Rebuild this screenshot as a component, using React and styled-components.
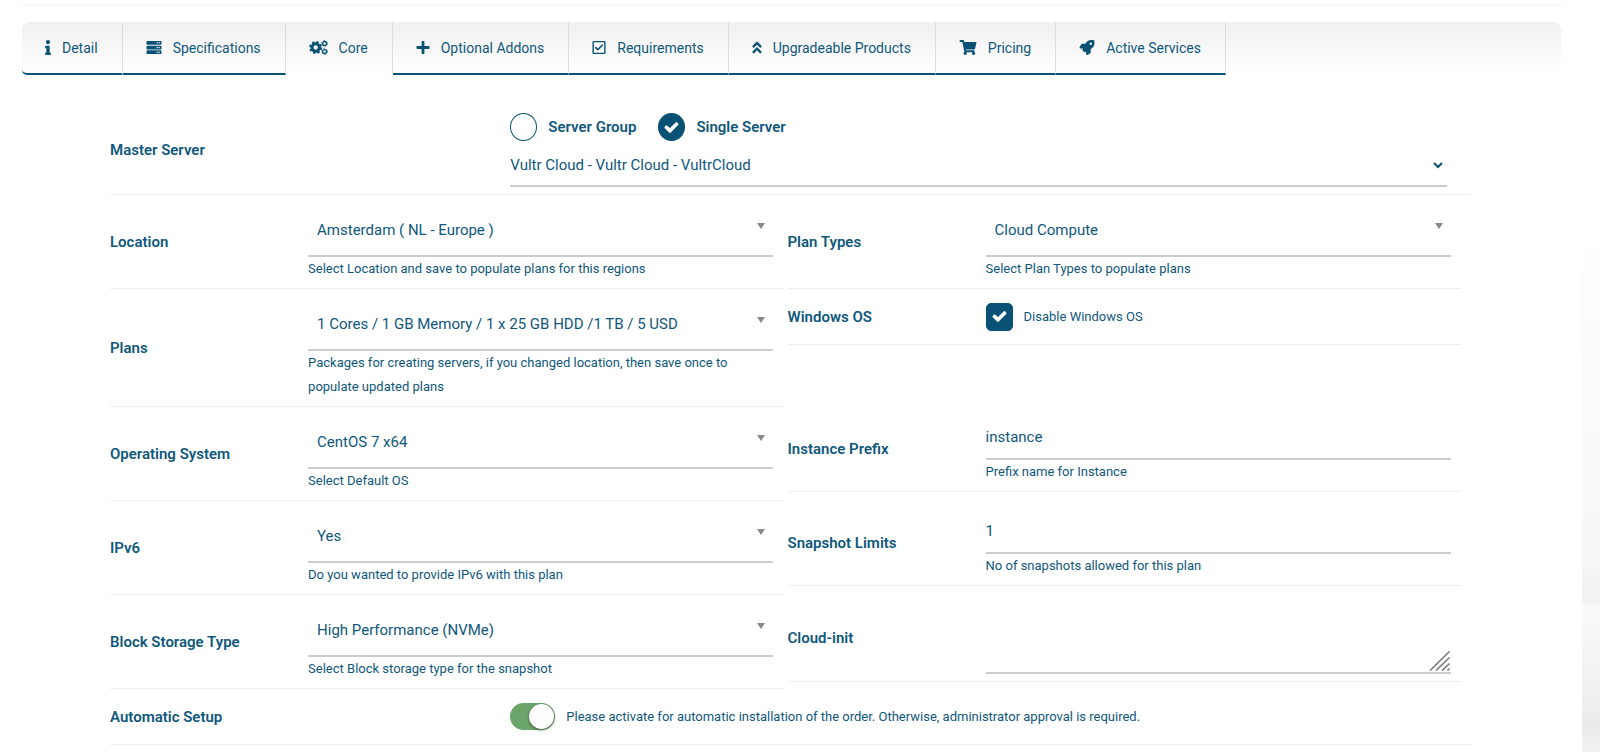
import React, { useState } from "react";
import styled, { createGlobalStyle } from "styled-components";
import {
  FaInfo,
  FaServer,
  FaPlus,
  FaRegCheckSquare,
  FaAngleDoubleUp,
  FaShoppingCart,
  FaRocket,
  FaCheck,
} from "react-icons/fa";

const GlobalStyle = createGlobalStyle`
  *, *:before, *:after {
    box-sizing: border-box;
  }
  body {
    margin: 0;
    color: #0f587c;
    background: #fff;
    font-family: Roboto, "Liberation Sans", sans-serif;
    font-size: 13px;
  }
  input, select, textarea, button {
    font: inherit;
    color: inherit;
  }
`;

const Page = styled.div`
  min-height: 100vh;
  padding-right: 18px;
  background: linear-gradient(
    to bottom,
    #fff 245px,
    #fdfdfd 246px,
    #fafafa 480px,
    #f6f6f6 560px,
    #f1f1f1 602px,
    #fafafa 606px,
    #f4f4f4 660px,
    #ebebeb 725px,
    #f2f2f2 752px
  );
`;

const Card = styled.main`
  min-height: 100vh;
  padding: 4px 21px 0 22px;
  background: #fff;
`;

const Divider = styled.hr`
  height: 2px;
  margin: 0 0 16px;
  border: 0;
  background: #f6f6f6;
`;

const Tabs = styled.nav`
  display: flex;
  border-radius: 8px 8px 0 0;
  background: linear-gradient(to bottom, #f0f0f0, #fff);
`;

const Tab = styled.button`
  display: flex;
  align-items: center;
  gap: 11px;
  height: 53px;
  padding: 0 24px 0 23px;
  border: 0;
  border-right: 1px solid #ddd;
  border-bottom: 2px solid ${(props) => (props.$active ? "transparent" : "#0a5275")};
  background: none;
  font-size: 14px;
  white-space: nowrap;
  cursor: pointer;
  &:first-child {
    border-bottom-left-radius: 5px;
  }
  svg {
    width: ${(props) => props.$iconWidth}px;
    height: 15px;
    color: #0a5275;
  }
`;

const Form = styled.form`
  padding: 31px 90px 0 88px;
`;

const Row = styled.div`
  display: grid;
  grid-template-columns: 5fr 12fr;
  align-items: center;
  min-height: 56px;
  padding: 7px 0;
  border-bottom: 1px solid #eee;
`;

const Pairs = styled.div`
  display: grid;
  grid-template-columns: 1fr 1fr;
  align-items: start;
  column-gap: 4px;
  padding-right: 10px;
`;

const Title = styled.label`
  font-size: 15px;
  font-weight: 600;
`;

const Field = styled.div`
  min-width: 0;
  padding-right: ${(props) => (props.$wide ? 24 : 10)}px;
`;

const Hint = styled.div`
  line-height: 24px;
`;

const Options = styled.div`
  display: flex;
  gap: 22px;
`;

const Option = styled.label`
  display: flex;
  align-items: center;
  gap: 11px;
  font-size: ${(props) => (props.$strong ? 15 : 13)}px;
  font-weight: ${(props) => (props.$strong ? 600 : 400)};
`;

const Tick = styled.span`
  position: relative;
  display: flex;
  width: 27px;
  height: 28px;
  input {
    width: 100%;
    height: 100%;
    margin: 0;
    appearance: none;
    border: 1px solid #0a5275;
    border-radius: ${(props) => (props.$round ? "50%" : "5px")};
  }
  input:checked {
    background: #0a5275;
  }
  svg {
    position: absolute;
    inset: 0;
    margin: auto;
    overflow: visible;
    color: #fff;
    stroke: currentColor;
    stroke-width: 40px;
    stroke-linejoin: round;
    font-size: 13px;
    pointer-events: none;
  }
`;

const SelectWrap = styled.div`
  position: relative;
  &:after {
    content: "";
    position: absolute;
    top: 21px;
    right: 8px;
    border: 4px solid transparent;
    border-top: 6px solid #888;
    border-bottom: 0;
  }
`;

const PickSelect = styled.select`
  width: 100%;
  height: 55px;
  padding: 3px 24px 0 9px;
  appearance: none;
  border: 0;
  border-bottom: 2px solid #ccc;
  background: none;
  font-size: 15px;
`;

const ServerSelectWrap = styled.div`
  position: relative;
  svg {
    position: absolute;
    top: 19px;
    right: 3px;
    pointer-events: none;
  }
`;

const ServerSelect = styled.select`
  width: 100%;
  height: 46px;
  padding: 3px 24px 0 0;
  appearance: none;
  border: 0;
  border-bottom: 2px solid #ccc;
  background: none;
  font-size: 15px;
`;

const TextInput = styled.input`
  display: block;
  width: 100%;
  height: 46px;
  padding: 2px 0 0;
  border: 0;
  border-bottom: 2px solid #ccc;
  background: none;
  font-size: 15px;
`;

const TextBox = styled.div`
  position: relative;
  svg {
    position: absolute;
    right: 0;
    bottom: 3px;
    pointer-events: none;
  }
`;

const TextArea = styled.textarea`
  display: block;
  width: 100%;
  height: 72px;
  padding: 0;
  resize: none;
  border: 0;
  border-bottom: 2px solid #ccc;
  background: none;
  font-size: 15px;
`;

const Switch = styled.input`
  flex: none;
  display: flex;
  align-items: center;
  width: 45px;
  height: 27px;
  margin: 0;
  padding: 0 1px;
  appearance: none;
  border-radius: 14px;
  background: #ccc;
  &:before {
    content: "";
    width: 25px;
    height: 25px;
    border-radius: 50%;
    background: #fff;
    box-shadow: 0 1px 3px rgba(0, 0, 0, 0.5);
  }
  &:checked {
    justify-content: flex-end;
    background: #6ba56c;
  }
`;

// one big gear and two small ones, teeth are dashed rings
function Gears() {
  return (
    <svg viewBox="0 0 20 16" fill="none" stroke="currentColor">
      <circle cx="7" cy="8" r="3.9" strokeWidth="3.2" />
      <circle cx="7" cy="8" r="5.9" strokeWidth="2" strokeDasharray="2.6 2.03" />
      <circle cx="16.5" cy="3.7" r="2.1" strokeWidth="1.4" />
      <circle cx="16.5" cy="3.7" r="3" strokeWidth="1" strokeDasharray="1.6 1.54" />
      <circle cx="16.5" cy="12.3" r="2.1" strokeWidth="1.4" />
      <circle cx="16.5" cy="12.3" r="3" strokeWidth="1" strokeDasharray="1.6 1.54" />
    </svg>
  );
}

const tabs = [
  { name: "Detail", icon: <FaInfo />, width: 6 },
  { name: "Specifications", icon: <FaServer />, width: 16 },
  { name: "Core", icon: <Gears />, width: 19 },
  { name: "Optional Addons", icon: <FaPlus />, width: 14 },
  { name: "Requirements", icon: <FaRegCheckSquare />, width: 14 },
  { name: "Upgradeable Products", icon: <FaAngleDoubleUp />, width: 10 },
  { name: "Pricing", icon: <FaShoppingCart />, width: 18 },
  { name: "Active Services", icon: <FaRocket />, width: 16 },
];

function SelectRow({ id, title, value, hint }) {
  return (
    <Row>
      <Title htmlFor={id}>{title}</Title>
      <Field>
        <SelectWrap>
          <PickSelect id={id}>
            <option>{value}</option>
          </PickSelect>
        </SelectWrap>
        <Hint>{hint}</Hint>
      </Field>
    </Row>
  );
}

function InputRow({ id, title, value, hint }) {
  return (
    <Row>
      <Title htmlFor={id}>{title}</Title>
      <Field>
        <TextInput id={id} type="text" defaultValue={value} />
        <Hint>{hint}</Hint>
      </Field>
    </Row>
  );
}

function App() {
  const [tab, setTab] = useState("Core");
  const [serverType, setServerType] = useState("single");
  const [windowsOff, setWindowsOff] = useState(true);
  const [autoSetup, setAutoSetup] = useState(true);

  return (
    <Page>
      <GlobalStyle />
      <Card>
        <Divider />
        <Tabs>
          {tabs.map((item) => (
            <Tab
              key={item.name}
              type="button"
              $active={item.name === tab}
              $iconWidth={item.width}
              onClick={() => setTab(item.name)}
            >
              {item.icon}
              {item.name}
            </Tab>
          ))}
        </Tabs>
        <Form>
          <Row>
            <Title htmlFor="server">Master Server</Title>
            <Field $wide>
              <Options>
                <Option $strong>
                  <Tick $round>
                    <input type="radio" name="type" checked={serverType === "group"} onChange={() => setServerType("group")} />
                    {serverType === "group" && <FaCheck />}
                  </Tick>
                  Server Group
                </Option>
                <Option $strong>
                  <Tick $round>
                    <input type="radio" name="type" checked={serverType === "single"} onChange={() => setServerType("single")} />
                    {serverType === "single" && <FaCheck />}
                  </Tick>
                  Single Server
                </Option>
              </Options>
              <ServerSelectWrap>
                <ServerSelect id="server">
                  <option>Vultr Cloud - Vultr Cloud - VultrCloud</option>
                </ServerSelect>
                <svg width="12" height="10" viewBox="0 0 12 10" fill="none" stroke="#0a5275" strokeWidth="2">
                  <path d="M2 3l4 4 4-4" />
                </svg>
              </ServerSelectWrap>
            </Field>
          </Row>

          <Pairs>
            <SelectRow
              id="location"
              title="Location"
              value="Amsterdam ( NL - Europe )"
              hint="Select Location and save to populate plans for this regions"
            />
            <SelectRow id="plan-types" title="Plan Types" value="Cloud Compute" hint="Select Plan Types to populate plans" />
            <SelectRow
              id="plans"
              title="Plans"
              value="1 Cores / 1 GB Memory / 1 x 25 GB HDD /1 TB / 5 USD"
              hint="Packages for creating servers, if you changed location, then save once to populate updated plans"
            />
            <Row>
              <Title htmlFor="windows">Windows OS</Title>
              <Field>
                <Option>
                  <Tick>
                    <input id="windows" type="checkbox" checked={windowsOff} onChange={() => setWindowsOff(!windowsOff)} />
                    {windowsOff && <FaCheck />}
                  </Tick>
                  Disable Windows OS
                </Option>
              </Field>
            </Row>
            <SelectRow id="os" title="Operating System" value="CentOS 7 x64" hint="Select Default OS" />
            <InputRow id="prefix" title="Instance Prefix" value="instance" hint="Prefix name for Instance" />
            <SelectRow id="ipv6" title="IPv6" value="Yes" hint="Do you wanted to provide IPv6 with this plan" />
            <InputRow id="snapshots" title="Snapshot Limits" value="1" hint="No of snapshots allowed for this plan" />
            <SelectRow
              id="storage"
              title="Block Storage Type"
              value="High Performance (NVMe)"
              hint="Select Block storage type for the snapshot"
            />
            <Row>
              <Title htmlFor="cloud-init">Cloud-init</Title>
              <Field>
                <TextBox>
                  <TextArea id="cloud-init" />
                  <svg width="22" height="20" viewBox="0 0 22 20" fill="none" stroke="#777" strokeWidth="1.5">
                    <path d="M1 19.500L20.500 0.500M7 19.500L20.500 6.500M13 19.500L20.500 12.500M18.500 19.500L20.500 17.500" />
                  </svg>
                </TextBox>
              </Field>
            </Row>
          </Pairs>

          <Row>
            <Title htmlFor="auto">Automatic Setup</Title>
            <Field $wide>
              <Option>
                <Switch id="auto" type="checkbox" checked={autoSetup} onChange={() => setAutoSetup(!autoSetup)} />
                Please activate for automatic installation of the order. Otherwise, administrator approval is required.
              </Option>
            </Field>
          </Row>
        </Form>
      </Card>
    </Page>
  );
}

export default App;
